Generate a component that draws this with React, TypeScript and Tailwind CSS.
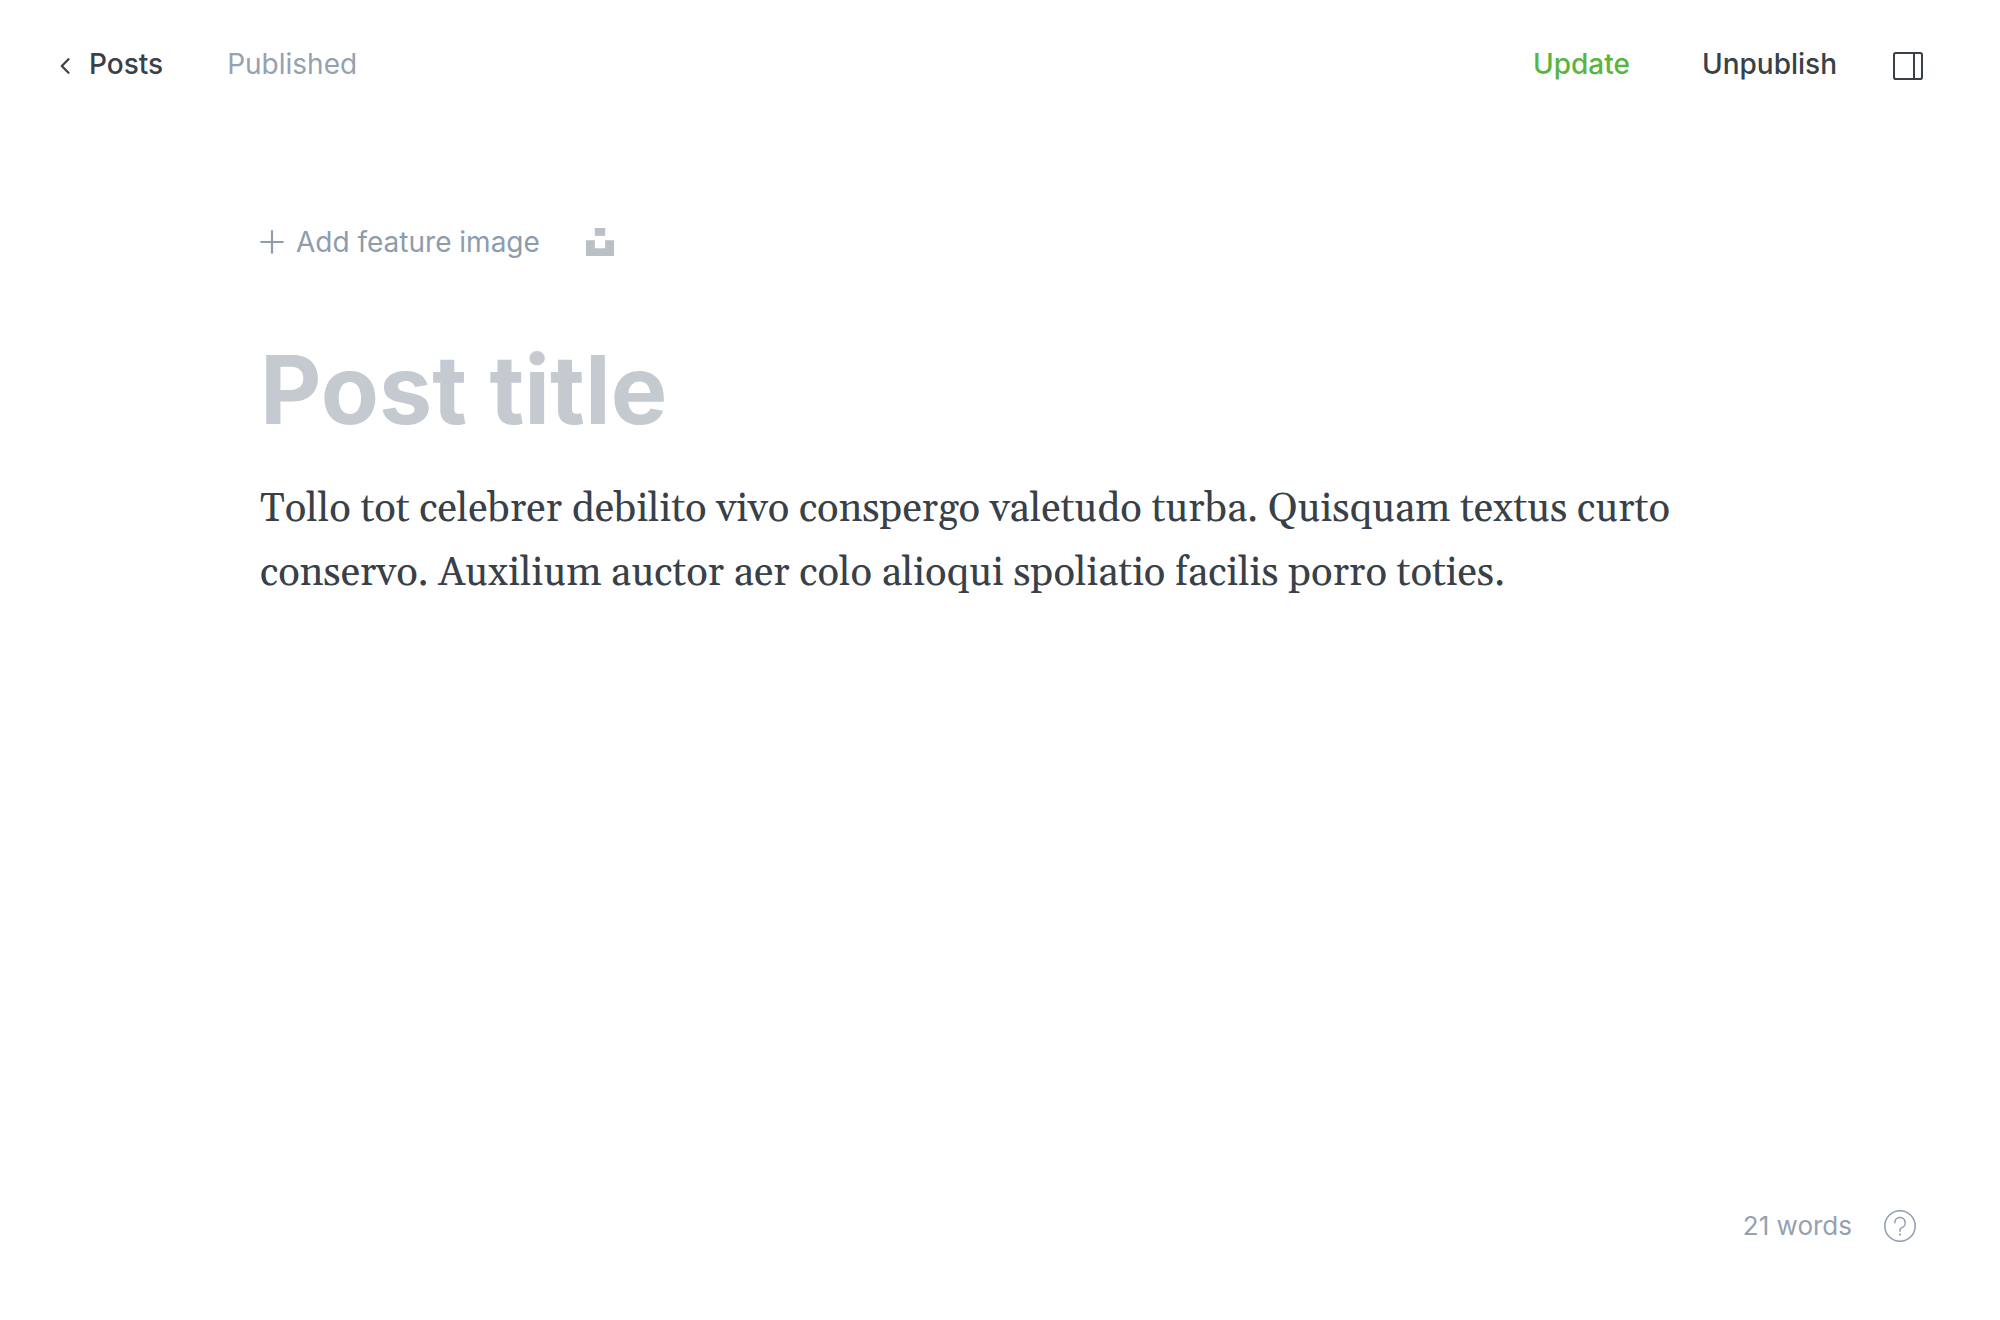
import React from "react";

const uiText = "text-[28px] leading-9";

function ChevronIcon() {
  return (
    <svg width="10" height="16" viewBox="0 0 10 16" fill="none" stroke="currentColor" strokeWidth="2.2" strokeLinecap="round" strokeLinejoin="round" aria-hidden="true">
      <path d="M8.5 1.2 L1.8 8 L8.5 14.8" />
    </svg>
  );
}

function SidebarIcon() {
  return (
    <svg width="30" height="28" viewBox="0 0 30 28" fill="none" stroke="currentColor" strokeWidth="2" aria-hidden="true">
      <rect x="1" y="1" width="28" height="26" rx="1.8" />
      <path d="M21 1 V27" />
    </svg>
  );
}

function PlusIcon() {
  return (
    <svg width="24" height="24" viewBox="0 0 24 24" fill="none" stroke="currentColor" strokeWidth="2.2" strokeLinecap="round" aria-hidden="true">
      <path d="M12 1.2 V22.8 M1.2 12 H22.8" />
    </svg>
  );
}

function UnsplashIcon() {
  return (
    <svg width="28" height="28" viewBox="0 0 28 28" fill="currentColor" aria-hidden="true">
      <path d="M8.8 0 H19.2 V7.9 H8.8 Z" />
      <path d="M0 12.3 H8.8 V20.2 H19.2 V12.3 H28 V28 H0 Z" />
    </svg>
  );
}

function HelpIcon() {
  return (
    <svg width="32" height="32" viewBox="0 0 32 32" fill="none" stroke="currentColor" strokeWidth="1.5" strokeLinecap="round" strokeLinejoin="round" aria-hidden="true">
      <circle cx="16" cy="16" r="15.2" />
      <path d="M10.8 12.8 A5.2 5.2 0 1 1 17.9 17.6 C16.7 18.1 16 18.9 16 20.2 V21.3" />
      <circle cx="16" cy="24.6" r="1.1" fill="currentColor" stroke="none" />
    </svg>
  );
}

export default function App() {
  return (
    <div className="flex min-h-screen flex-col bg-white font-['Inter',sans-serif] text-[#394047]">
      <header className="flex items-center justify-between pr-[77px] pl-[60px] pt-[46px]">
        <div className="flex items-center gap-16">
          <a href="#posts" className={`flex items-center gap-[19px] font-medium ${uiText}`}>
            <span className="pt-1">
              <ChevronIcon />
            </span>
            Posts
          </a>
          <span className={`text-[#95a1b1] ${uiText}`}>Published</span>
        </div>
        <div className="flex items-center">
          <button className={`font-medium text-[#5ab440] ${uiText}`}>Update</button>
          <button className={`ml-[72px] font-medium ${uiText}`}>Unpublish</button>
          <button aria-label="Post settings" className="ml-14 pt-1">
            <SidebarIcon />
          </button>
        </div>
      </header>

      <main className="grow px-[260px] pt-[142px]">
        <div className="flex items-center gap-[46px]">
          <button className={`flex items-center gap-3 text-[#8e9cac] ${uiText}`}>
            <PlusIcon />
            Add feature image
          </button>
          <button aria-label="Choose from Unsplash" className="text-[#b9c1c4]">
            <UnsplashIcon />
          </button>
        </div>
        <input
          aria-label="Post title"
          placeholder="Post title"
          className="mt-[75px] block h-[110px] w-full text-[95px] font-bold outline-none placeholder:text-[#c5cad1]"
        />
        <p className="mt-[33px] font-['Georgia','Gelasio','Liberation_Serif',serif] text-[40px] leading-[64px]">
          Tollo tot celebrer debilito vivo conspergo valetudo turba. Quisquam textus curto conservo. Auxilium auctor aer colo alioqui spoliatio facilis porro toties.
        </p>
      </main>

      <footer className="flex items-center justify-end gap-8 pr-[84px] pb-[76px] text-[#95a1b1]">
        <span className="text-[26px] leading-9">21 words</span>
        <button aria-label="Help" className="text-[#8e9cac]">
          <HelpIcon />
        </button>
      </footer>
    </div>
  );
}
